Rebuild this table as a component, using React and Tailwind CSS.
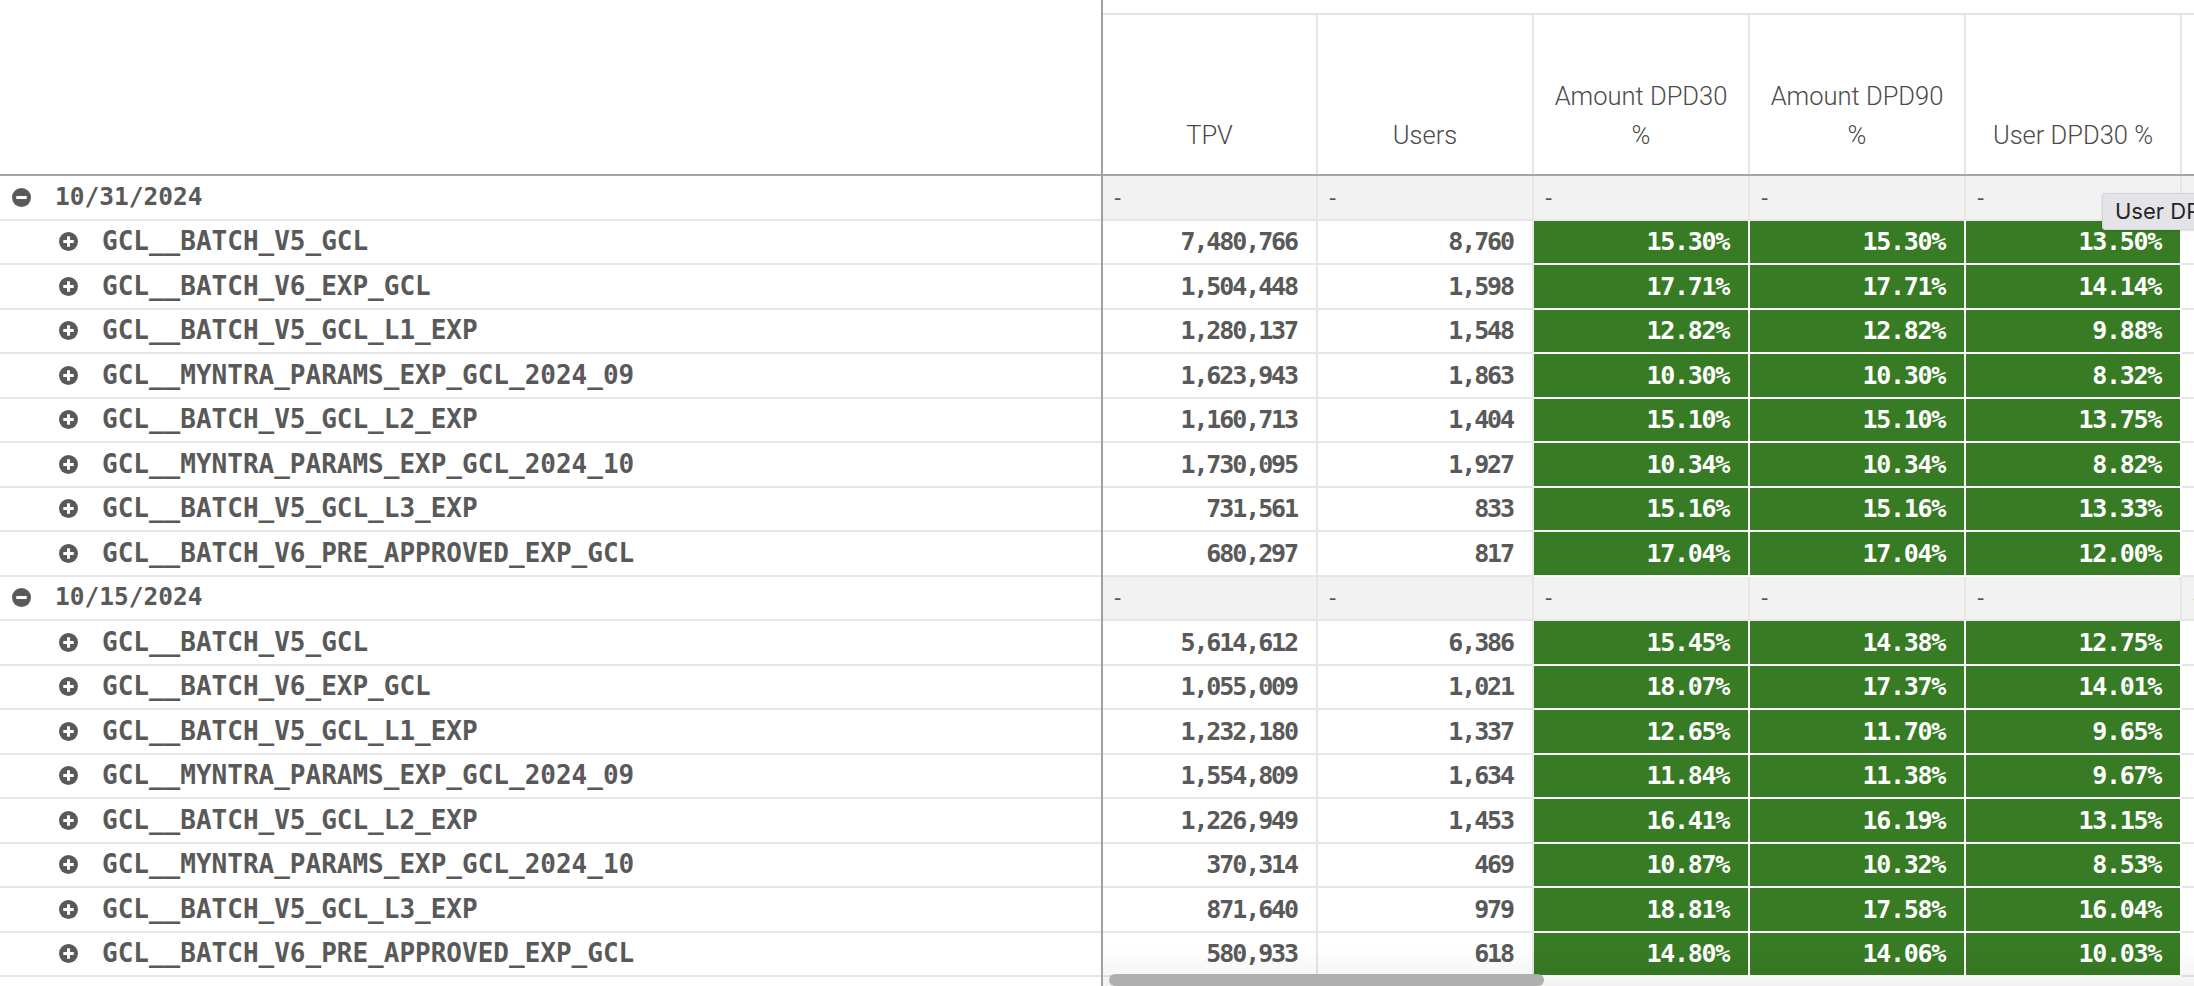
import React from "react";

const groups = [
  {
    date: "10/31/2024",
    rows: [
      ["GCL__BATCH_V5_GCL", "7,480,766", "8,760", "15.30%", "15.30%", "13.50%"],
      ["GCL__BATCH_V6_EXP_GCL", "1,504,448", "1,598", "17.71%", "17.71%", "14.14%"],
      ["GCL__BATCH_V5_GCL_L1_EXP", "1,280,137", "1,548", "12.82%", "12.82%", "9.88%"],
      ["GCL__MYNTRA_PARAMS_EXP_GCL_2024_09", "1,623,943", "1,863", "10.30%", "10.30%", "8.32%"],
      ["GCL__BATCH_V5_GCL_L2_EXP", "1,160,713", "1,404", "15.10%", "15.10%", "13.75%"],
      ["GCL__MYNTRA_PARAMS_EXP_GCL_2024_10", "1,730,095", "1,927", "10.34%", "10.34%", "8.82%"],
      ["GCL__BATCH_V5_GCL_L3_EXP", "731,561", "833", "15.16%", "15.16%", "13.33%"],
      ["GCL__BATCH_V6_PRE_APPROVED_EXP_GCL", "680,297", "817", "17.04%", "17.04%", "12.00%"],
    ],
  },
  {
    date: "10/15/2024",
    rows: [
      ["GCL__BATCH_V5_GCL", "5,614,612", "6,386", "15.45%", "14.38%", "12.75%"],
      ["GCL__BATCH_V6_EXP_GCL", "1,055,009", "1,021", "18.07%", "17.37%", "14.01%"],
      ["GCL__BATCH_V5_GCL_L1_EXP", "1,232,180", "1,337", "12.65%", "11.70%", "9.65%"],
      ["GCL__MYNTRA_PARAMS_EXP_GCL_2024_09", "1,554,809", "1,634", "11.84%", "11.38%", "9.67%"],
      ["GCL__BATCH_V5_GCL_L2_EXP", "1,226,949", "1,453", "16.41%", "16.19%", "13.15%"],
      ["GCL__MYNTRA_PARAMS_EXP_GCL_2024_10", "370,314", "469", "10.87%", "10.32%", "8.53%"],
      ["GCL__BATCH_V5_GCL_L3_EXP", "871,640", "979", "18.81%", "17.58%", "16.04%"],
      ["GCL__BATCH_V6_PRE_APPROVED_EXP_GCL", "580,933", "618", "14.80%", "14.06%", "10.03%"],
    ],
  },
];

const mono = "font-['DejaVu_Sans_Mono',monospace]";

function ToggleIcon({ open }) {
  return (
    <svg width="19" height="19" viewBox="0 0 20 20" className="shrink-0">
      <circle cx="10" cy="10" r="10" fill="#595959" />
      <rect x="4.5" y="8.4" width="11" height="3.2" fill="#fff" />
      {!open && <rect x="8.4" y="4.5" width="3.2" height="11" fill="#fff" />}
    </svg>
  );
}

const widths = ["w-[215px]", "w-[216px]", "w-[216px]", "w-[216px]", "w-[216px]", "w-[216px]"];

function HeaderCell({ w, children }) {
  return (
    <div className={`${w} shrink-0 h-full border-r-2 border-[#e6e6e6] flex flex-col justify-end items-center pb-[19px] text-[25.5px] leading-[39px] font-light text-[#4a4a4a] text-center font-['Roboto',sans-serif]`}>
      {children}
    </div>
  );
}

function GroupRight() {
  return (
    <div className="flex h-[44.5px]">
      {widths.map((w, i) => (
        <div key={i} className={`${w} shrink-0 h-full bg-[#f2f2f2] border-r-2 border-b-2 border-[#e6e6e6] flex items-center pl-2 text-[22px] text-[#595959] ${mono}`}>
          -
        </div>
      ))}
    </div>
  );
}

function DataRight({ r }) {
  return (
    <div className={`flex h-[44.5px] text-[25px] font-bold ${mono}`}>
      <div className={`${widths[0]} shrink-0 h-full border-r-2 border-b-2 border-[#e6e6e6] flex items-center justify-end pr-[19px] text-[#595959] tracking-[-2.1px]`}>{r[1]}</div>
      <div className={`${widths[1]} shrink-0 h-full border-r-2 border-b-2 border-[#e6e6e6] flex items-center justify-end pr-[19px] text-[#595959] tracking-[-2.1px]`}>{r[2]}</div>
      {[r[3], r[4], r[5]].map((v, i) => (
        <div key={i} className="w-[216px] shrink-0 h-full bg-[#377b24] border-r-2 border-b-2 border-white flex items-center justify-end pr-[19px] text-white tracking-[-1.3px]">
          {v}
        </div>
      ))}
      <div className={`${widths[5]} shrink-0 h-full border-r-2 border-b-2 border-[#e6e6e6]`} />
    </div>
  );
}

export default function App() {
  return (
    <div className="w-[2194px] h-[986px] overflow-hidden bg-white flex">
      {/* left: dimension labels */}
      <div className="w-[1101px] shrink-0">
        <div className="h-[176px] border-b-2 border-[#a6a6a6]" />
        {groups.map((g) => (
          <div key={g.date}>
            <div className="h-[44.5px] border-b-2 border-[#e6e6e6] flex items-center pl-[12px] gap-[24px]">
              <ToggleIcon open />
              <span className={`text-[24.5px] font-bold text-[#595959] ${mono}`}>{g.date}</span>
            </div>
            {g.rows.map((r) => (
              <div key={r[0]} className="h-[44.5px] border-b-2 border-[#e6e6e6] flex items-center pl-[59px] gap-[24px]">
                <ToggleIcon />
                <span className={`text-[26px] font-bold text-[#595959] ${mono}`}>{r[0]}</span>
              </div>
            ))}
          </div>
        ))}
      </div>

      {/* right: measures */}
      <div className="relative flex-1 border-l-2 border-[#a0a0a0] overflow-hidden">
        <div className="h-[15px] border-b-2 border-[#e3e3e3]" />
        <div className="flex h-[161px] border-b-2 border-[#a6a6a6]">
          <HeaderCell w={widths[0]}>TPV</HeaderCell>
          <HeaderCell w={widths[1]}>Users</HeaderCell>
          <HeaderCell w={widths[2]}>
            <span>Amount DPD30</span>
            <span>%</span>
          </HeaderCell>
          <HeaderCell w={widths[3]}>
            <span>Amount DPD90</span>
            <span>%</span>
          </HeaderCell>
          <HeaderCell w={widths[4]}>User DPD30 %</HeaderCell>
          <HeaderCell w={widths[5]}>{""}</HeaderCell>
        </div>
        {groups.map((g) => (
          <div key={g.date}>
            <GroupRight />
            {g.rows.map((r) => (
              <DataRight key={r[0]} r={r} />
            ))}
          </div>
        ))}

        {/* scroll fade + thumb */}
        <div className="absolute left-0 right-0 bottom-0 h-[40px] bg-gradient-to-b from-black/0 to-black/[0.05] pointer-events-none" />
        <div className="absolute left-[6px] bottom-[0px] w-[435px] h-[12px] rounded-full bg-[#a9a9a9]/90" />

        {/* tooltip */}
        <div className="absolute left-[999px] top-[193px] h-[37px] w-[200px] bg-[#e4e4e8] border border-[#d4d4d8] rounded-[3px] shadow-sm flex items-center pl-[12px] text-[22px] text-[#262626] whitespace-nowrap font-['Inter',sans-serif]">
          User DP
        </div>
      </div>
    </div>
  );
}
